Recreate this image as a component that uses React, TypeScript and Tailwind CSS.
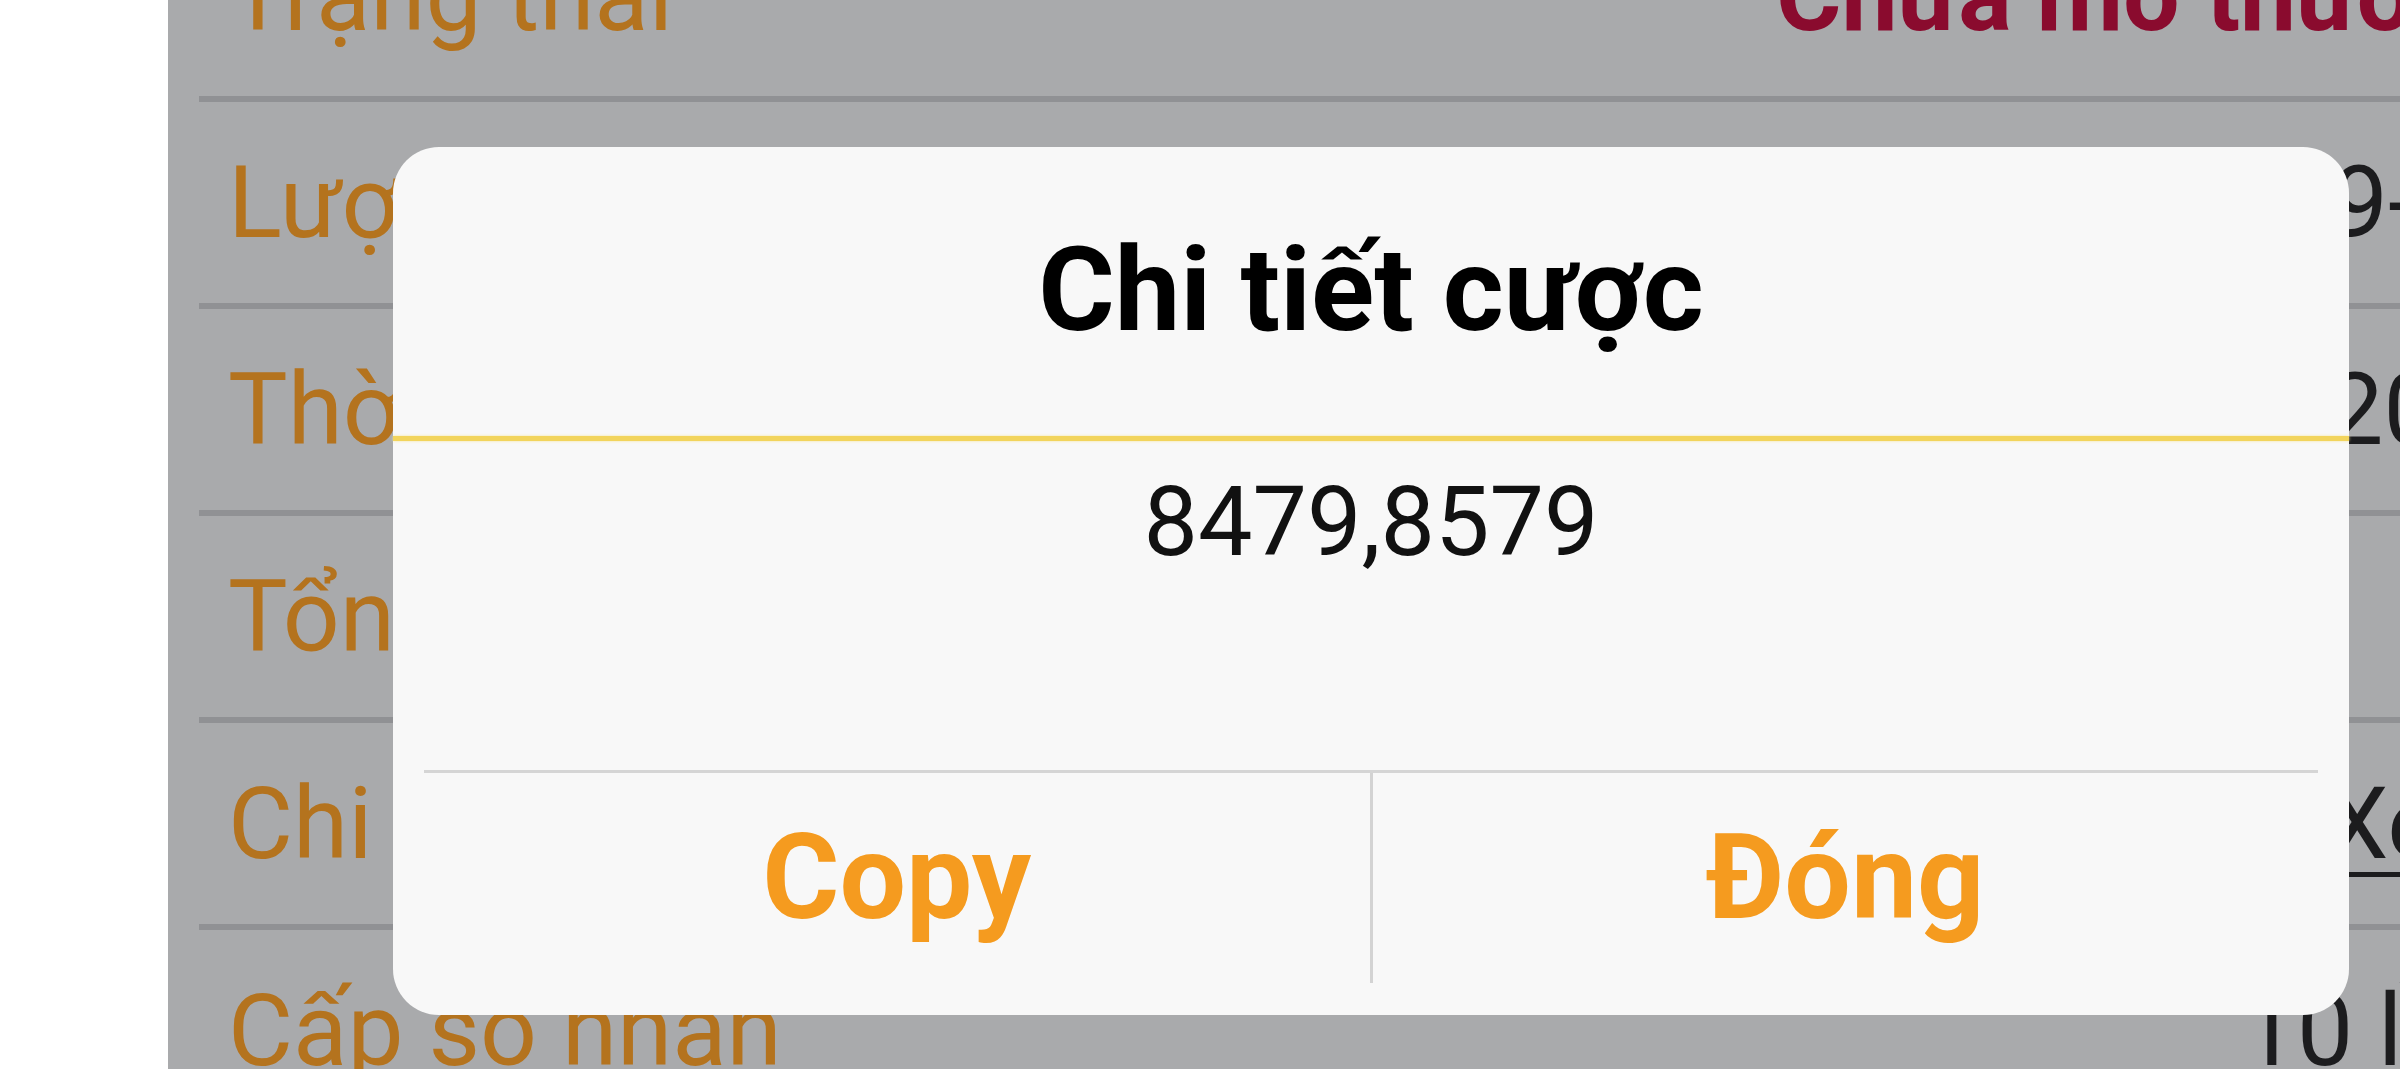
import React from "react";

interface Row {
  label: string;
  value: string;
  tone: "red" | "dark" | "link";
  shift?: string;
}

const rows: Row[] = [
  { label: "Trạng thái", value: "Chưa mở thưởng", tone: "red" },
  { label: "Lượt xổ", value: "2025-09-20", tone: "dark" },
  { label: "Thời gian cược", value: "17:08:06 20/09/2025", tone: "dark", shift: "mr-[-24px]" },
  { label: "Tổng số mua", value: "2", tone: "dark" },
  { label: "Chi tiết chọn", value: "Xem", tone: "link" },
  { label: "Cấp số nhân", value: "10 lần", tone: "dark", shift: "mr-[16px]" },
];

function valueClass(tone: Row["tone"]) {
  if (tone === "red") return "font-bold text-[#8a0b2e]";
  if (tone === "link") return "text-[#1c1c1e] underline decoration-[5px] underline-offset-[14px]";
  return "text-[#1c1c1e]";
}

export default function App() {
  return (
    <div className="relative w-[2400px] h-[1069px] overflow-hidden bg-white font-[Roboto,sans-serif]">
      {/* dimmed detail list behind the dialog */}
      <div className="ml-[168px] w-[2360px] h-full bg-[#a9aaac] flex flex-col">
        <div className="-mt-[105px] flex flex-col">
          {rows.map((row, i) => (
            <div key={row.label}>
              <div className="h-[201px] pl-[60px] flex items-center justify-between">
                <span className="text-[100px] leading-none text-[#b4731e] whitespace-nowrap">{row.label}</span>
                <span className={`text-[100px] leading-none whitespace-nowrap ${valueClass(row.tone)} ${row.shift ?? ""}`}>
                  {row.value}
                </span>
              </div>
              {i < rows.length - 1 && <div className="ml-[31px] h-[6px] bg-[#909194]" />}
            </div>
          ))}
        </div>
      </div>

      {/* dialog */}
      <div className="absolute left-[393px] top-[147px] w-[1956px] h-[868px] rounded-[46px] bg-[#f8f8f8] flex flex-col">
        <h2 className="pt-[85px] text-center text-[117px] leading-none font-bold text-black">Chi tiết cược</h2>
        <div className="mt-[87px] h-[5px] bg-[#f2d45c] shadow-[0_0_3px_#f6e69c]" />
        <p className="mt-[33px] text-center text-[97px] leading-none text-[#111111]">8479,8579</p>

        <div className="mt-auto mx-[31px] h-[3px] bg-[#d5d5d5]" />
        <div className="mx-[31px] mb-[32px] h-[210px] flex">
          <button className="flex-1 flex items-center justify-center text-[118px] leading-none font-bold text-[#f59b1f]">
            Copy
          </button>
          <div className="w-[3px] bg-[#d3d3d3]" />
          <button className="flex-1 flex items-center justify-center text-[118px] leading-none font-bold text-[#f59b1f]">
            Đóng
          </button>
        </div>
      </div>
    </div>
  );
}
